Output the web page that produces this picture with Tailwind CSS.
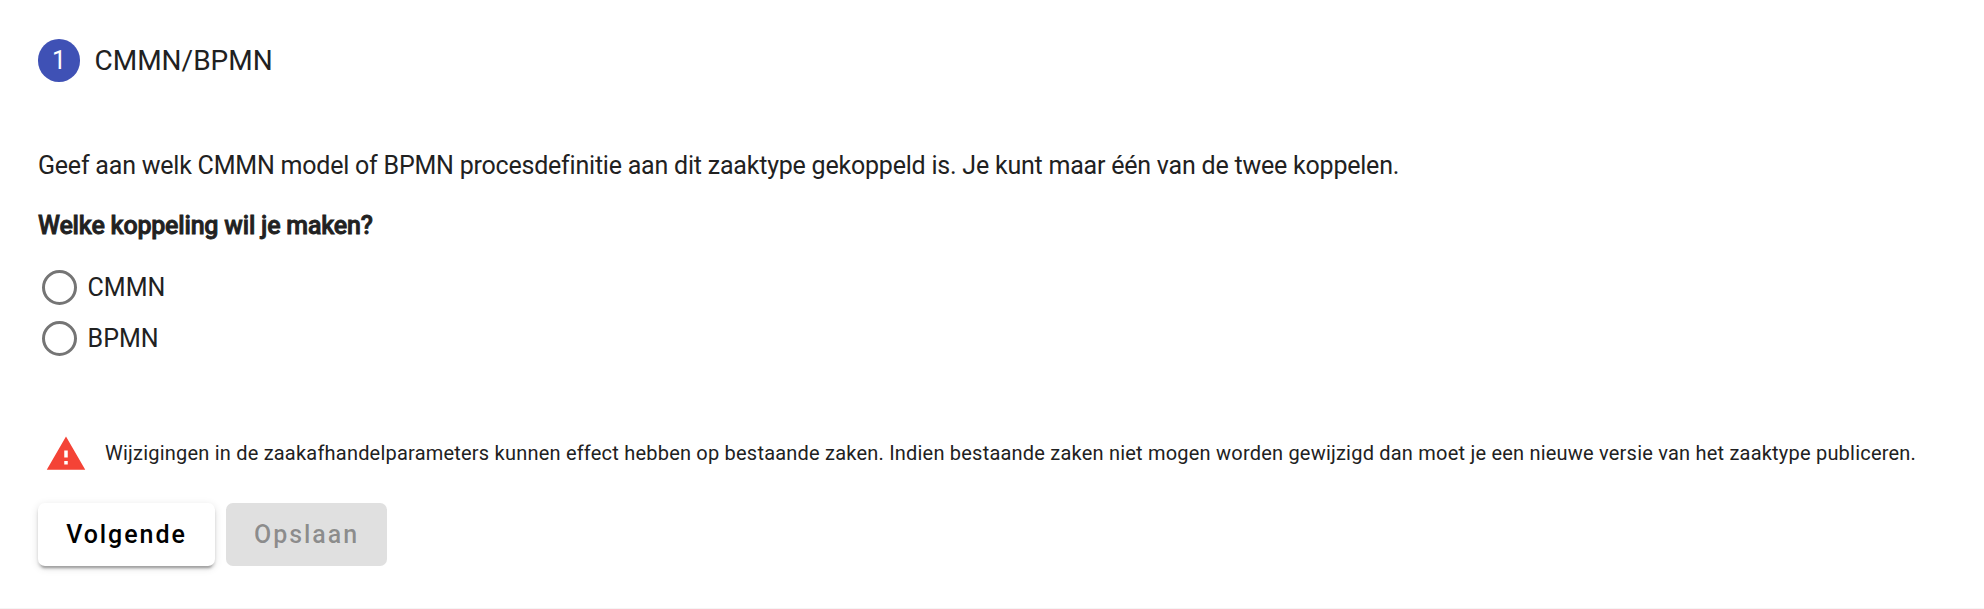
<!DOCTYPE html>
<html lang="nl"><head><meta charset="utf-8"><title>CMMN/BPMN</title>
<script src="https://cdn.jsdelivr.net/npm/@tailwindcss/browser@4"></script></head>
<body class="h-[609px] overflow-hidden border-b border-[#f5f5f5] bg-white font-[Roboto,sans-serif] text-[#212121]">
<main class="flex flex-col items-start pl-[38px] pt-[39px]">
<header class="flex h-[43px] items-center gap-[14.5px]"><span class="flex h-[43px] w-[42px] items-center justify-center rounded-full bg-[#3f51b5] text-[25px] text-white">1</span><h1 class="text-[28px] whitespace-nowrap">CMMN/BPMN</h1></header>
<p class="mt-[66px] h-[36px] text-[25px] leading-[36px] tracking-[-0.215px] whitespace-nowrap">Geef aan welk CMMN model of BPMN procesdefinitie aan dit zaaktype gekoppeld is. Je kunt maar één van de twee koppelen.</p>
<h2 class="mt-[24px] h-[36px] text-[25px] leading-[36px] font-medium tracking-[-0.2px] whitespace-nowrap [-webkit-text-stroke:0.8px]">Welke koppeling wil je maken?</h2>
<label class="mt-[18px] ml-1 flex h-[51px] items-center gap-[10.5px] text-[25px] tracking-[0.05px]"><span class="size-[35px] rounded-full border-[3px] border-[#757575]"></span>CMMN</label>
<label class="ml-1 flex h-[51px] items-center gap-[10.5px] text-[25px] tracking-[0.05px]"><span class="size-[35px] rounded-full border-[3px] border-[#757575]"></span>BPMN</label>
<div class="mt-[67px] ml-[7px] flex h-[44px] items-center gap-[18px]"><svg class="mt-px size-[42px]" viewBox="0 0 24 24" fill="#f44336"><path d="M1 21h22L12 2 1 21zm12-3h-2v-2h2v2zm0-4h-2v-4h2v4z"/></svg><span class="text-[20px] tracking-[0.21px] whitespace-nowrap">Wijzigingen in de zaakafhandelparameters kunnen effect hebben op bestaande zaken. Indien bestaande zaken niet mogen worden gewijzigd dan moet je een nieuwe versie van het zaaktype publiceren.</span></div>
<div class="mt-[28px] flex gap-[11px]"><button class="h-[63px] w-[177px] rounded-[7px] pt-px text-[25px] font-medium tracking-[1.95px] text-black shadow-[0_5px_2px_-3px_rgba(0,0,0,0.2),0_3px_3px_0_rgba(0,0,0,0.14),0_2px_9px_0_rgba(0,0,0,0.12)]">Volgende</button><button class="h-[63px] w-[161px] rounded-[7px] bg-[#e0e0e0] pt-px text-[25px] font-medium tracking-[1.95px] text-black/38">Opslaan</button></div>
</main></body></html>
